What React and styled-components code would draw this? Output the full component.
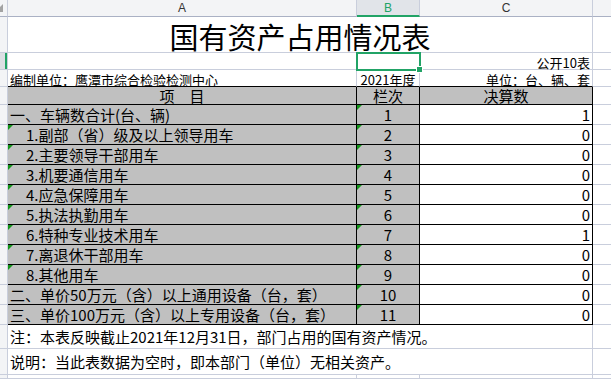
import React from "react";
import styled, { createGlobalStyle, css } from "styled-components";

const LINE = "#c9cedc";
const BLACK = "#000";
const GREEN = "#21a366";

const GlobalStyle = createGlobalStyle`
  html, body {
    margin: 0;
    padding: 0;
    background: #fff;
    overflow: hidden;
  }
  body {
    font-family: "Noto Sans CJK SC", "Liberation Sans", sans-serif;
  }
`;

const Sheet = styled.div`
  display: grid;
  grid-template-columns: 8px 349px 63px 173px 1fr;
  grid-template-rows: 17px 36px 17px 17px 18px repeat(11, 20px) 24px 26px 1fr;
  width: 611px;
  height: 379px;
  overflow: hidden;
  color: #000;
  font-family: "Noto Sans CJK SC", sans-serif;
`;

const Corner = styled.div`
  position: relative;
  box-sizing: border-box;
  background: #f3f4f6;
  border-right: 1px solid ${LINE};
  border-bottom: 1px solid #aab1c4;
  overflow: hidden;
  &::after {
    content: "";
    position: absolute;
    right: 4px;
    bottom: 4px;
    border-bottom: 8px solid #a3a3a3;
    border-left: 8px solid transparent;
  }
`;

const ColHead = styled.div`
  box-sizing: border-box;
  display: flex;
  align-items: center;
  justify-content: center;
  background: ${(p) => (p.$active ? "#e1e4e9" : "#f3f4f6")};
  color: ${(p) => (p.$active ? GREEN : "#333")};
  border-right: ${(p) => (p.$last ? "none" : `1px solid ${LINE}`)};
  border-bottom: ${(p) => (p.$active ? `2px solid ${GREEN}` : "1px solid #aab1c4")};
  font-family: "Liberation Sans", sans-serif;
  font-size: 12px;
`;

const RowHead = styled.div`
  box-sizing: border-box;
  background: ${(p) => (p.$active ? "#dcdfe4" : "#f3f4f6")};
  border-right: 1px solid ${LINE};
  border-bottom: 1px solid ${LINE};
  ${(p) =>
    p.$active &&
    css`
      box-shadow: inset -2px 0 0 ${GREEN};
    `}
`;

const Cell = styled.div`
  position: relative;
  box-sizing: border-box;
  display: flex;
  align-items: ${(p) => (p.$valign === "bottom" ? "flex-end" : "center")};
  justify-content: ${(p) =>
    p.$align === "center" ? "center" : p.$align === "right" ? "flex-end" : "flex-start"};
  grid-column: ${(p) => (p.$span ? `span ${p.$span}` : "auto")};
  padding: 0 2px ${(p) => (p.$valign === "bottom" ? "0" : "0")} ${(p) => 2 + (p.$indent || 0)}px;
  background: ${(p) => (p.$gray ? "#c0c0c0" : "#fff")};
  border-right: ${(p) => (p.$last ? "none" : `1px solid ${p.$rb || LINE}`)};
  border-bottom: 1px solid ${(p) => p.$bb || LINE};
  font-size: ${(p) => p.$size || 15}px;
  line-height: 1;
  white-space: nowrap;
  ${(p) =>
    p.$mark &&
    css`
      &::before {
        content: "";
        position: absolute;
        top: 0;
        left: 0;
        border-top: 5px solid #13961a;
        border-right: 5px solid transparent;
      }
    `}
`;

const Title = styled(Cell)`
  font-size: 29px;
  padding-top: 3px;
  letter-spacing: 0;
`;

const Selection = styled.span`
  position: absolute;
  top: -1px;
  left: -1px;
  right: -2px;
  bottom: -2px;
  border: 2px solid ${GREEN};
  z-index: 2;
  &::after {
    content: "";
    position: absolute;
    right: -4px;
    bottom: -4px;
    width: 5px;
    height: 5px;
    background: ${GREEN};
    border: 1px solid #fff;
  }
`;

const rows = [
  { name: "一、车辆数合计(台、辆)", no: 1, value: 1 },
  { name: "1.副部（省）级及以上领导用车", no: 2, value: 0, sub: true },
  { name: "2.主要领导干部用车", no: 3, value: 0, sub: true },
  { name: "3.机要通信用车", no: 4, value: 0, sub: true },
  { name: "4.应急保障用车", no: 5, value: 0, sub: true },
  { name: "5.执法执勤用车", no: 6, value: 0, sub: true },
  { name: "6.特种专业技术用车", no: 7, value: 1, sub: true },
  { name: "7.离退休干部用车", no: 8, value: 0, sub: true },
  { name: "8.其他用车", no: 9, value: 0, sub: true },
  { name: "二、单价50万元（含）以上通用设备（台，套）", no: 10, value: 0 },
  { name: "三、单价100万元（含）以上专用设备（台，套）", no: 11, value: 0 },
];

const notes = [
  "注：本表反映截止2021年12月31日，部门占用的国有资产情况。",
  "说明：当此表数据为空时，即本部门（单位）无相关资产。",
];

function App() {
  return (
    <>
      <GlobalStyle />
      <Sheet>
        <Corner />
        <ColHead>A</ColHead>
        <ColHead $active>B</ColHead>
        <ColHead>C</ColHead>
        <ColHead $last />

        <RowHead />
        <Title $span={3} $align="center">
          国有资产占用情况表
        </Title>
        <Cell $last />

        <RowHead $active />
        <Cell />
        <Cell>
          <Selection />
        </Cell>
        <Cell $size={13} $align="right" $valign="bottom">
          公开10表
        </Cell>
        <Cell $last />

        <RowHead />
        <Cell $size={13} $valign="bottom" $bb={BLACK}>
          编制单位：鹰潭市综合检验检测中心
        </Cell>
        <Cell $size={13} $align="center" $valign="bottom" $bb={BLACK}>
          2021年度
        </Cell>
        <Cell $size={13} $align="right" $valign="bottom" $bb={BLACK}>
          单位：台、辆、套
        </Cell>
        <Cell $last />

        <RowHead />
        <Cell $gray $align="center" $rb={BLACK} $bb={BLACK}>
          项{"\u3000"}目
        </Cell>
        <Cell $gray $align="center" $rb={BLACK} $bb={BLACK}>
          栏次
        </Cell>
        <Cell $gray $align="center" $rb={BLACK} $bb={BLACK}>
          决算数
        </Cell>
        <Cell $last />

        {rows.map((row) => (
          <React.Fragment key={row.no}>
            <RowHead />
            <Cell $gray $indent={row.sub ? 16 : 0} $mark={row.sub} $rb={BLACK} $bb={BLACK}>
              {row.name}
            </Cell>
            <Cell $gray $mark $align="center" $rb={BLACK} $bb={BLACK}>
              {row.no}
            </Cell>
            <Cell $align="right" $rb={BLACK} $bb={BLACK}>
              {row.value}
            </Cell>
            <Cell $last />
          </React.Fragment>
        ))}

        {notes.map((note) => (
          <React.Fragment key={note}>
            <RowHead />
            <Cell $span={3}>{note}</Cell>
            <Cell $last />
          </React.Fragment>
        ))}

        <RowHead />
        <Cell />
        <Cell />
        <Cell />
        <Cell $last />
      </Sheet>
    </>
  );
}

export default App;
